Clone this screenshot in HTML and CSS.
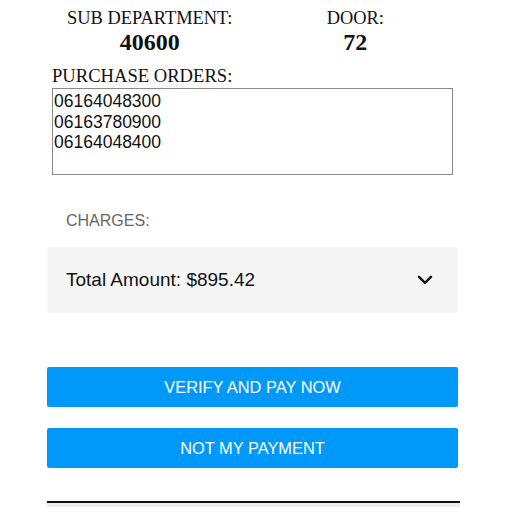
FILE: index.html
```html
<!DOCTYPE html>
<html lang="en">
<head>
    <meta charset="UTF-8">
    <meta name="viewport" content="width=device-width, initial-scale=1.0">
    <title>Payment</title>
    <link rel="stylesheet" href="styles.css">
</head>
<body>
    <div class="container">
        <div class="info-row">
            <div class="info-col">
                <div class="info-label">SUB DEPARTMENT:</div>
                <div class="info-value">40600</div>
            </div>
            <div class="info-col">
                <div class="info-label">DOOR:</div>
                <div class="info-value">72</div>
            </div>
        </div>

        <div class="po-group">
            <label for="po-list">PURCHASE ORDERS:</label>
            <textarea id="po-list" readonly>06164048300
06163780900
06164048400</textarea>
        </div>

        <div class="charges-title">CHARGES:</div>
        <div class="charges-box">
            <span class="charges-total">Total Amount: $895.42</span>
            <svg class="chevron" width="16" height="10" viewBox="0 0 16 10"><path d="M2 1.8 L8 7.8 L14 1.8" fill="none" stroke="#111" stroke-width="2.4" stroke-linecap="round" stroke-linejoin="round"/></svg>
        </div>

        <div class="button-group">
            <button type="button" class="btn">VERIFY AND PAY NOW</button>
            <button type="button" class="btn">NOT MY PAYMENT</button>
        </div>

        <div class="next-field"></div>
    </div>
</body>
</html>
```

FILE: styles.css
```css
body { margin: 0; background-color: #fff; font-family: "Liberation Sans", Arial, sans-serif; }
.container { width: 411px; margin-left: 47px; }

.info-row { display: flex; padding-top: 7px; }
.info-col { flex: 1; text-align: center; font-family: "Liberation Serif", "Times New Roman", serif; color: #111; }
.info-label { font-size: 18.4px; line-height: 22px; }
.info-value { font-size: 24px; font-weight: bold; line-height: 26px; }

.po-group { padding-left: 5px; margin-top: 10px; }
.po-group label { display: block; font-family: "Liberation Serif", "Times New Roman", serif; font-size: 18.6px; line-height: 22px; color: #111; }
.po-group textarea {
    display: block;
    width: 401px;
    height: 87px;
    margin-top: 1px;
    padding: 2px 1px;
    border: 1px solid #8a8a8a;
    box-sizing: border-box;
    font-family: "Liberation Sans", Arial, sans-serif;
    font-size: 17.5px;
    line-height: 20.5px;
    color: #111;
    resize: none;
    outline: none;
}

.charges-title { margin: 37px 0 0 19px; font-size: 16px; line-height: 18px; color: #666; }
.charges-box {
    margin-top: 17px;
    height: 66px;
    background-color: #f5f5f5;
    border-radius: 2px;
    display: flex;
    justify-content: space-between;
    align-items: center;
    padding: 0 25px 0 19px;
    font-size: 19px;
    color: #111;
}
.chevron { display: block; }

.button-group { margin-top: 54px; display: flex; flex-direction: column; gap: 21px; }
.btn {
    height: 40px;
    background-color: #0099fa;
    color: #fff;
    border: none;
    border-radius: 2px;
    font-family: "Liberation Sans", Arial, sans-serif;
    font-size: 16.4px;
    cursor: pointer;
}

.next-field { margin-top: 33px; height: 4px; border-top: 2px solid #111; background-color: #ececec; margin-right: -2px; }
```
